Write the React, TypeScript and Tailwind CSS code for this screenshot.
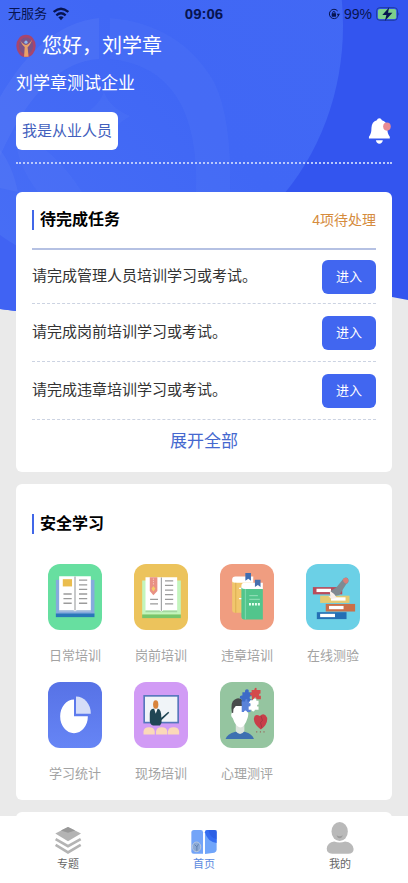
import type { ReactNode } from "react";

const tasks = [
  "请完成管理人员培训学习或考试。",
  "请完成岗前培训学习或考试。",
  "请完成违章培训学习或考试。",
];

function WifiIcon() {
  return (
    <svg viewBox="0 0 48 42" className="h-3.5 w-4" aria-hidden="true">
      <g fill="none" stroke="#071450" strokeWidth="7">
        <path d="M2 15Q24 -5 46 15" />
        <path d="M10 25Q24 13 38 25" />
      </g>
      <path d="M16 31q8-7 16 0l-8 9z" fill="#071450" />
    </svg>
  );
}

function LockRotationIcon() {
  return (
    <svg viewBox="0 0 36 36" className="h-3 w-3" aria-hidden="true">
      <path d="M29 9A14 14 0 1 0 32 20" fill="none" stroke="#071450" strokeWidth="3" />
      <path d="M26 17h10l-5 8z" fill="#071450" />
      <rect x="11" y="16" width="13" height="10" rx="1" fill="#071450" />
      <path d="M14 17v-3a3.500 3.500 0 0 1 7 0v3" fill="none" stroke="#071450" strokeWidth="3" />
    </svg>
  );
}

function BatteryIcon() {
  return (
    <svg viewBox="0 0 76 46" className="h-4 w-6" aria-hidden="true">
      <rect x="2" y="3" width="66" height="40" rx="10" fill="none" stroke="#1d3a9c" strokeWidth="3" />
      <rect x="6" y="7" width="58" height="32" rx="6" fill="#7dcf8b" />
      <path d="M71 17q5 6 0 12z" fill="#1d3a9c" />
      <path d="M42 2 20 26h13l-5 19 24-26H38z" fill="#071450" />
    </svg>
  );
}

function StatusBar() {
  return (
    <div className="grid h-7 grid-cols-3 items-center px-2 text-[#071450]">
      <div className="flex items-center gap-1.5 text-[13px]">
        无服务
        <WifiIcon />
      </div>
      <div className="text-center text-[15px] font-bold">09:06</div>
      <div className="flex items-center justify-end gap-1 text-sm">
        <LockRotationIcon />
        99%
        <BatteryIcon />
      </div>
    </div>
  );
}

function HeroBackground() {
  return (
    <svg
      viewBox="0 0 408 312"
      preserveAspectRatio="none"
      className="absolute inset-x-0 top-0 h-[312px] w-full"
      aria-hidden="true"
    >
      <defs>
        <clipPath id="hero">
          <path d="M0 0H408V300L392 297L16 311L0 309Z" />
        </clipPath>
        <linearGradient id="disc" x1="0" y1="1" x2="1" y2="0">
          <stop offset="0" stopColor="#4a70f5" />
          <stop offset="0.500" stopColor="#4067f5" />
          <stop offset="1" stopColor="#4369f4" />
        </linearGradient>
      </defs>
      <g clipPath="url(#hero)">
        <rect width="408" height="312" fill="#3355ef" />
        <path d="M0 220Q8 236 24 250V312H0Z" fill="#4063f3" />
        <ellipse cx="120" cy="26" rx="223" ry="248" fill="url(#disc)" />
        <g fill="#6285f8" fillOpacity="0.250">
          <path d="M99 18Q42 24 0 97V156Q42 62 99 59Z" />
          <path d="M0 150Q12 164 18 192L0 188Z" />
        </g>
        <g fill="#6285f8" fillOpacity="0.140">
          <path d="M110 18Q180 24 214 82Q232 118 230 192H196Q200 68 110 59Z" />
          <path d="M104 92Q110 108 130 116Q112 126 104 146Q96 126 80 116Q98 108 104 92Z" />
          <path d="M14 130Q54 148 82 192H38Q16 164 14 130Z" />
        </g>
      </g>
    </svg>
  );
}

function LogoIcon() {
  return (
    <svg viewBox="48 96 62 72" className="h-6 w-5" aria-hidden="true">
      <ellipse cx="79" cy="132" rx="30" ry="35" fill="#a8456d" />
      <ellipse cx="79" cy="132" rx="22" ry="26" fill="#7c5285" />
      <path d="M61 114Q68 131 75 135L73 165H87L84 136Q92 130 98 113Q88 128 79 129Q69 127 61 114Z" fill="#e9a168" />
      <circle cx="79" cy="120" r="5" fill="#8cb9ef" />
    </svg>
  );
}

function BellIcon() {
  return (
    <svg viewBox="490 346 76 84" className="h-7 w-6" aria-hidden="true">
      <path
        d="M526 348q6 0 8 6q16 4 17 24q0 20 8 28v6H493v-6q8-8 8-28q1-20 17-24q2-6 8-6Z"
        fill="#fff"
      />
      <path d="M515 417h22q-2 11-11 11t-11-11Z" fill="#fff" />
      <ellipse cx="550" cy="374" rx="12" ry="13" fill="#e88b94" />
    </svg>
  );
}

function SectionTitle({ children }: { children: ReactNode }) {
  return (
    <h2 className="flex items-center gap-1.5 text-base font-bold text-black">
      <span className="h-5 w-0.5 bg-[#4167e8]" />
      {children}
    </h2>
  );
}

function DailyIcon() {
  return (
    <svg viewBox="54 38 162 200" className="size-full" aria-hidden="true">
      <rect x="77" y="86" width="117" height="105" fill="#86aadd" />
      <rect x="77" y="188" width="117" height="11" fill="#2977b9" />
      <path d="M87 75H183V178H141L135 182L129 178H87Z" fill="#fff" />
      <path d="M87 178H130L135 182L141 178H183V182H87Z" fill="#b5c8de" />
      <rect x="98" y="84" width="28" height="22" fill="#eabd4e" />
      <path d="M135 76V179" stroke="#8f9294" strokeWidth="3" />
      <path
        d="M100 129h25M100 143h25M100 157h25M147 87h25M147 101h25M147 115h25M147 129h25M147 143h25M147 157h25"
        stroke="#9b9b9b"
        strokeWidth="4"
      />
    </svg>
  );
}

function PreJobIcon() {
  return (
    <svg viewBox="312 38 162 200" className="size-full" aria-hidden="true">
      <rect x="336" y="88" width="117" height="104" fill="#c3f5bd" />
      <rect x="336" y="191" width="117" height="11" fill="#76c66b" />
      <path d="M346 78H442V179H400L394 183L388 179H346Z" fill="#fff" />
      <path d="M346 179H388L394 183L400 179H442V184H346Z" fill="#a3d7a1" />
      <path d="M359 78H382V120L370 133L359 120Z" fill="#e99184" />
      <path d="M370 82v20" stroke="#f8c7bd" strokeWidth="3" strokeDasharray="4 3" />
      <path d="M370 105l6 8-6 8-6-8Z" fill="#f4ce65" />
      <path d="M394 79V180" stroke="#8f9294" strokeWidth="3" />
      <path
        d="M360 145h24M360 159h24M405 89h25M405 103h25M405 117h25M405 131h25M405 145h25M405 159h25"
        stroke="#9b9b9b"
        strokeWidth="4"
      />
    </svg>
  );
}

function ViolationIcon() {
  return (
    <svg viewBox="45 38 162 200" className="size-full" aria-hidden="true">
      <path d="M81 86Q81 76 91 76H145V96H81Z" fill="#fff" />
      <path d="M81 91q4 4 10 4h54v91H90q-9 0-9-9Z" fill="#f1c66c" />
      <path d="M92 95v91" stroke="#dcae52" strokeWidth="3" />
      <path d="M102 112h11M102 143h11" stroke="#fff" strokeWidth="4" />
      <path d="M121 65h17v24l-8-6-9 6Z" fill="#3e6db2" />
      <path d="M109 105Q109 95 119 95H174V115H109Z" fill="#fff" />
      <path d="M109 109q3 5 11 5h54v92h-56q-9 0-9-10Z" fill="#52c58c" />
      <path d="M121 114v92" stroke="#83dab0" strokeWidth="3" />
      <path d="M133 134h26M133 145h32" stroke="#9ae2bc" strokeWidth="3" />
      <path d="M132 160h34" stroke="#e9fff2" strokeWidth="8" strokeDasharray="6 3" />
      <path d="M150 86h17v22l-8-6-9 6Z" fill="#466fad" />
    </svg>
  );
}

function QuizIcon() {
  return (
    <svg viewBox="303 38 162 200" className="size-full" aria-hidden="true">
      <rect x="323" y="108" width="89" height="22" fill="#b94b5a" />
      <rect x="334" y="113" width="44" height="10" fill="#fff" />
      <rect x="345" y="134" width="89" height="22" fill="#e5ca72" />
      <rect x="378" y="139" width="44" height="10" fill="#fff" />
      <rect x="362" y="159" width="89" height="23" fill="#ca7049" />
      <rect x="372" y="165" width="44" height="10" fill="#fff" />
      <rect x="335" y="184" width="90" height="21" fill="#246fb4" />
      <rect x="345" y="189" width="45" height="10" fill="#fff" />
      <path d="M376 120L394 109L416 82Q427 74 431 86Q433 94 424 99L403 132L384 136Z" fill="#808991" />
      <path d="M414 84Q423 75 430 84Q432 94 424 98Q414 94 414 84Z" fill="#d77e79" />
      <path d="M374 119q15 8 22 22l-17 3-9-9 6 1Z" fill="#f7eee9" />
    </svg>
  );
}

function StatsIcon() {
  return (
    <svg viewBox="54 36 162 200" className="size-full" aria-hidden="true">
      <path d="M132 89A42 51 0 1 0 174 140H132Z" fill="#fff" />
      <path d="M138 80A45 52 0 0 1 183 132H138Z" fill="#d5ddf8" />
    </svg>
  );
}

function ClassroomIcon() {
  return (
    <svg viewBox="312 36 162 200" className="size-full" aria-hidden="true">
      <rect x="342" y="78" width="103" height="81" fill="#f0f4f8" stroke="#5777bd" strokeWidth="5" />
      <path d="M369 117Q359 118 359 132V154Q360 165 369 168H390Q396 163 395 151L418 129L415 126L394 144Q394 118 384 117Z" fill="#204654" />
      <path d="M372 116h11l-6 16Z" fill="#fff" />
      <ellipse cx="377" cy="104" rx="8" ry="13" fill="#d8843d" />
      <path d="M340 195v-9q1-13 17-13t17 13v9ZM378 195v-9q1-13 17-13t17 13v9ZM414 195v-9q1-13 17-13t17 13v9Z" fill="#fbd9b9" />
    </svg>
  );
}

function PsychologyIcon() {
  return (
    <svg viewBox="45 36 162 200" className="size-full" aria-hidden="true">
      <path d="M61 209Q65 194 91 187H119Q143 194 147 209Z" fill="#3e70b1" />
      <path d="M92 165H118V185Q105 202 92 185Z" fill="#dce4dd" />
      <path d="M82 103L128 111V129Q132 129 128 144Q119 173 105 174Q91 171 83 146Q75 138 80 129Z" fill="#fff" />
      <path d="M80 129Q76 95 88 90Q99 80 113 91L126 119H114V109H92L85 118L84 130Z" fill="#484b4b" />
      <path d="M112 67h8q-1-9 6-9t5 9h9v13q-6-2-6 4t6 4v15h-10q1 11-6 11t-5-11h-9V87q-6 1-6-5t8-5Z" fill="#3d6bc7" />
      <path d="M140 60h8q1-8 7-6v6h12v11q-6 0-4 7h5v10h-13q-1-7-6-5v7h-8V78q-6-1-6-6t5-4Z" fill="#d34a4b" />
      <path d="M110 95h10q0-8 7-7v7h10v12q5-1 5 5t-5 5v10h-11q0-5-5-5t-4 5h-7Z" fill="#5a82d8" />
      <path d="M136 91h8q0-6 6-5t4 7h7v11q-6 0-4 6h4v10h-11q-1 6-6 5t-4-5h-9v-10q7 0 6-6t-6-3Z" fill="#fff" />
      <path d="M168 180Q145 163 147 146Q150 130 165 139Q178 127 187 144Q190 163 168 180Z" fill="#c83f49" />
      <path d="M168 139l5 13-6 7 4 16" stroke="#8e3742" strokeWidth="2" fill="none" />
      <path d="M154 187h29" stroke="#9a5952" strokeWidth="4" strokeDasharray="3 8" />
    </svg>
  );
}

const courses = [
  { label: "日常培训", color: "bg-[#67dfa0]", icon: <DailyIcon /> },
  { label: "岗前培训", color: "bg-[#ecc35c]", icon: <PreJobIcon /> },
  { label: "违章培训", color: "bg-[#f09d80]", icon: <ViolationIcon /> },
  { label: "在线测验", color: "bg-[#6bd0e6]", icon: <QuizIcon /> },
  { label: "学习统计", color: "bg-linear-to-b from-[#5772e6] to-[#6685f5]", icon: <StatsIcon /> },
  { label: "现场培训", color: "bg-[#d19bf5]", icon: <ClassroomIcon /> },
  { label: "心理测评", color: "bg-[#95c5a0]", icon: <PsychologyIcon /> },
];

function TopicsIcon() {
  return (
    <svg viewBox="164 108 80 86" className="h-7 w-7" aria-hidden="true">
      <path d="M204 111L244 131L204 155L165 131Z" fill="#b4b4b4" />
      <path d="M204 111L226 122L204 129L182 122Z" fill="#989898" />
      <path d="M166 148L204 170L243 148M166 166L204 189L243 166" fill="none" stroke="#b4b4b4" strokeWidth="8" />
    </svg>
  );
}

function HomeIcon() {
  return (
    <svg viewBox="0 0 78 74" className="h-6 w-7" aria-hidden="true">
      <path d="M8 0H29Q36 0 36 7V73H7Q0 73 0 66V8Q0 0 8 0Z" fill="#73a4f8" />
      <path d="M49 0H70Q78 0 78 8V61Q78 68 71 70L42 74V7Q42 0 49 0Z" fill="#70a5fa" />
      <path d="M49 0H70Q78 0 78 8V40Q49 36 42 7Q42 0 49 0Z" fill="#346cf0" />
      <path d="M53 0H78V28Q56 24 53 0Z" fill="#2454da" fillOpacity="0.500" />
      <ellipse cx="16" cy="52" rx="13" ry="15" fill="#8ba9d6" stroke="#b7c6dc" strokeWidth="3" />
      <path d="M10 45l7 7v12M22 44l-5 8" fill="none" stroke="#607fae" strokeWidth="3" />
    </svg>
  );
}

function ProfileIcon() {
  return (
    <svg viewBox="367 106 80 94" className="h-8 w-7" aria-hidden="true">
      <ellipse cx="406" cy="134" rx="24" ry="28" fill="#b9b9b9" />
      <path d="M368 184Q370 165 390 163Q406 169 422 163Q445 166 447 185Q447 199 431 199H384Q368 198 368 184Z" fill="#b9b9b9" />
      <path d="M397 145q9 6 18 0-2 9-9 9t-9-9Z" fill="#9c9c9c" />
    </svg>
  );
}

const tabs = [
  { label: "专题", icon: <TopicsIcon />, active: false },
  { label: "首页", icon: <HomeIcon />, active: true },
  { label: "我的", icon: <ProfileIcon />, active: false },
];

export default function App() {
  return (
    <div className="flex h-screen flex-col bg-[#eaeaea] font-['Liberation_Sans','Noto_Sans_CJK_SC',sans-serif]">
      <div className="min-h-0 flex-1 overflow-y-auto [scrollbar-width:none]">
        <div className="relative">
          <HeroBackground />
          <div className="relative">
            <StatusBar />

            <header className="mx-4 border-b-2 border-dotted border-[#b9c8fb] pb-3 text-white">
              <div className="flex h-9 items-center gap-1.5">
                <LogoIcon />
                <h1 className="text-xl">您好，刘学章</h1>
              </div>
              <p className="flex h-10 items-center text-[17px]">刘学章测试企业</p>
              <div className="mt-2 flex items-center justify-between">
                <button
                  type="button"
                  className="h-[38px] rounded-md bg-white px-1.5 text-[15px] text-[#4260bd]"
                >
                  我是从业人员
                </button>
                <button type="button" aria-label="消息">
                  <BellIcon />
                </button>
              </div>
            </header>

            <main className="flex flex-col gap-3 px-4 pt-7">
              <section className="rounded-md bg-white px-4 pb-2">
                <div className="flex h-14 items-center justify-between">
                  <SectionTitle>待完成任务</SectionTitle>
                  <span className="text-sm text-[#d58b3d]">4项待处理</span>
                </div>
                <ul className="border-t-2 border-[#b5c1e3]">
                  {tasks.map((task) => (
                    <li
                      key={task}
                      className="flex h-[58px] items-center justify-between border-b border-dashed border-[#ccd3e2] first:h-[54px]"
                    >
                      <span className="text-[15px] text-[#333333]">{task}</span>
                      <button
                        type="button"
                        className="h-[34px] w-[54px] rounded-md bg-[#4166f0] text-[13px] text-white"
                      >
                        进入
                      </button>
                    </li>
                  ))}
                </ul>
                <button type="button" className="block h-11 w-full text-[17px] text-[#4568cf]">
                  展开全部
                </button>
              </section>

              <section className="rounded-md bg-white px-4 pt-7 pb-4">
                <SectionTitle>安全学习</SectionTitle>
                <div className="mt-7 grid grid-cols-4 gap-y-4">
                  {courses.map((course) => (
                    <a key={course.label} href="#" className="flex flex-col items-center gap-4">
                      <span className={`h-[66px] w-[54px] overflow-hidden rounded-xl ${course.color}`}>
                        {course.icon}
                      </span>
                      <span className="text-[13px] leading-5 text-[#a3a3a3]">{course.label}</span>
                    </a>
                  ))}
                </div>
              </section>

              <section className="h-10 rounded-md bg-white" />
            </main>
          </div>
        </div>
      </div>

      <nav className="grid h-[67px] shrink-0 grid-cols-3 bg-white">
        {tabs.map((tab) => (
          <a
            key={tab.label}
            href="#"
            className={`flex flex-col items-center text-[11px] leading-4 ${
              tab.active ? "text-[#5b8ae0]" : "text-[#666666]"
            }`}
          >
            <span className="flex h-10 items-end pb-0.5">{tab.icon}</span>
            {tab.label}
          </a>
        ))}
      </nav>
    </div>
  );
}
